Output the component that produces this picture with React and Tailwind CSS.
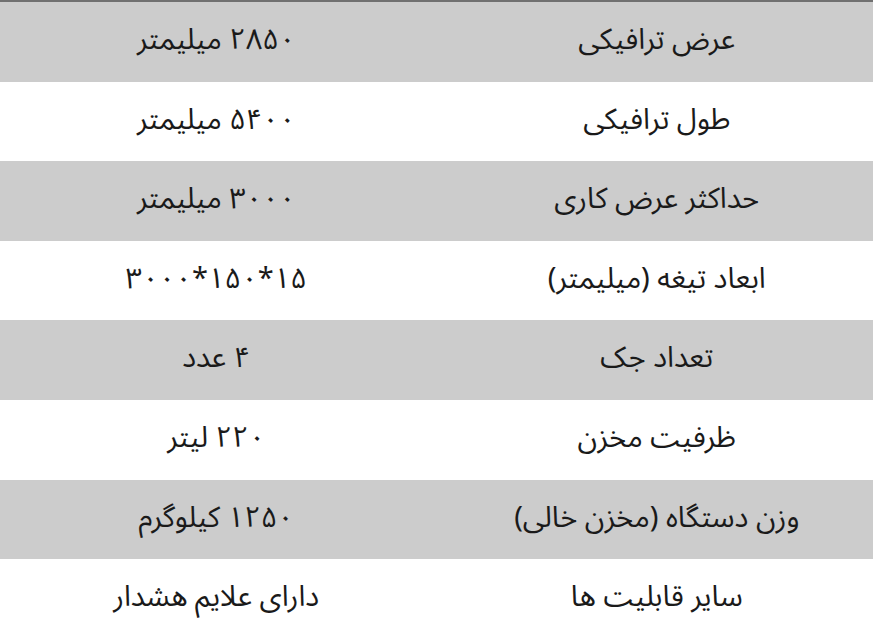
const rows = [
  ["عرض ترافیکی", "۲۸۵۰ میلیمتر"],
  ["طول ترافیکی", "۵۴۰۰ میلیمتر"],
  ["حداکثر عرض کاری", "۳۰۰۰ میلیمتر"],
  ["ابعاد تیغه (میلیمتر)", "۱۵*۱۵۰*۳۰۰۰"],
  ["تعداد جک", "۴ عدد"],
  ["ظرفیت مخزن", "۲۲۰ لیتر"],
  ["وزن دستگاه (مخزن خالی)", "۱۲۵۰ کیلوگرم"],
  ["سایر قابلیت ها", "دارای علایم هشدار"],
];

export default function App() {
  return (
    <div
      dir="rtl"
      className="w-[873px] min-h-[627px] bg-white border-t-2 border-[#707070] text-[#1a1a1a] text-[29px] leading-[1.5] font-normal"
      style={{ fontFamily: '"Noto Sans Arabic", "DejaVu Sans", sans-serif' }}
    >
      {rows.map(([label, value], i) => (
        <div
          key={label}
          className={`grid grid-cols-2 h-[79.6px] items-center text-center ${i % 2 === 0 ? "bg-[#cccccc]" : "bg-white"}`}
        >
          <div className="pl-1 -mt-1">{label}</div>
          <div className="pr-1 -mt-1">{value}</div>
        </div>
      ))}
    </div>
  );
}
